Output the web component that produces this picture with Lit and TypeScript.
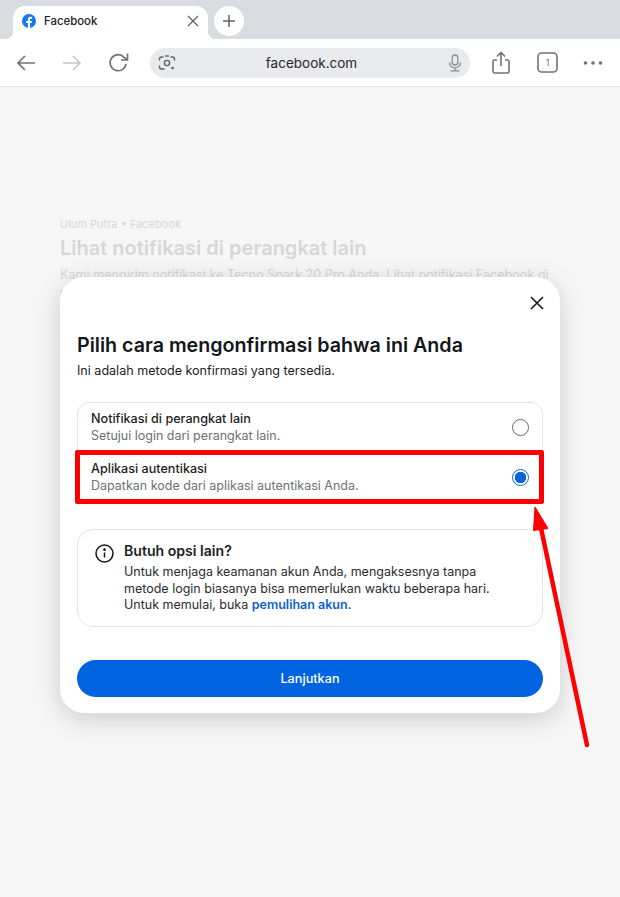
import { LitElement, html, css } from "lit";
import { customElement } from "lit/decorators.js";

@customElement("app-root")
export class AppRoot extends LitElement {
  static styles = css`
    :host { display: block; position: relative; width: 620px; height: 897px; overflow: hidden; background: #f6f6f6; font-family: Inter, "Noto Sans", sans-serif; color: #1c1e21; }
    * { box-sizing: border-box; }
    .strip { height: 39px; background: #d9dce0; display: flex; align-items: flex-end; padding-left: 13px; gap: 6px; }
    .tab { width: 195px; height: 33px; background: #fff; border-radius: 12px 12px 0 0; display: flex; align-items: center; padding: 0 8px 4px 9px; font-size: 11.4px; font-weight: 500; color: #202124; position: relative; }
    .tab::before, .tab::after { content: ""; position: absolute; bottom: 0; width: 8px; height: 8px; }
    .tab::before { left: -8px; background: radial-gradient(circle at 0 0, #d9dce0 8px, #fff 8.5px); }
    .tab::after { right: -8px; background: radial-gradient(circle at 100% 0, #d9dce0 8px, #fff 8.5px); }
    .tab span { flex: 1; margin-left: 8px; }
    .plus { width: 30px; height: 30px; border-radius: 50%; background: #fff; display: flex; align-items: center; justify-content: center; margin: 0 0 3px 0; }
    .toolbar { height: 48px; background: #fff; border-bottom: 1px solid #e3e4e6; display: flex; align-items: center; padding: 0 17px 0 16px; }
    .nav { display: flex; gap: 26px; align-items: center; width: 134px; flex: none; }
    .url { width: 320px; height: 30px; background: #e8eaed; border-radius: 15px; display: flex; align-items: center; justify-content: space-between; padding: 0 8px 0 8px; flex: none; font-size: 13.5px; color: #26282b; }
    .url b { font-weight: 400; margin-right: 1px; }
    .actions { display: flex; align-items: center; flex: 1; justify-content: space-between; padding: 0 0 0 21px; }
    .page { padding: 129px 60px 0; }
    .by { font-size: 11px; line-height: 16px; color: #d6d6d6; }
    .ghost-title { font-size: 20px; font-weight: 600; line-height: 28px; color: #d6d6d6; margin: 2px 0 4px; white-space: nowrap; }
    .ghost-text { font-size: 12.6px; line-height: 18px; color: #d6d6d6; white-space: nowrap; }
    .dialog { position: absolute; left: 60px; top: 277px; width: 500px; height: 436px; background: #fff; border-radius: 24px; box-shadow: 0 6px 26px rgba(0,0,0,.17); padding: 55px 17px 0; }
    .close { position: absolute; right: 15px; top: 18px; width: 16px; height: 16px; display: block; }
    h1 { margin: 0; padding-top: 1px; font-size: 19.66px; line-height: 24px; font-weight: 600; color: #14171a; white-space: nowrap; }
    .sub { margin: 6px 0 0; font-size: 12.55px; line-height: 16px; color: #1c1e21; }
    .options { margin-top: 23px; border: 1px solid #e3e4e6; border-radius: 12px; overflow: hidden; }
    .opt { height: 50px; display: flex; align-items: center; justify-content: space-between; padding: 0 13px 2px 13px; }
    .opt strong { display: block; font-size: 12.6px; line-height: 16px; font-weight: 500; color: #1c1e21; }
    .opt small { display: block; font-size: 12.5px; line-height: 17px; color: #6b7076; }
    .radio { width: 17px; height: 17px; border-radius: 50%; border: 1.7px solid #5f6670; flex: none; }
    .radio.on { border-color: #0a66d8; background: radial-gradient(circle, #0a66d8 5.5px, #fff 6px); }
    .info { margin-top: 25px; height: 98px; border: 1px solid #e3e4e6; border-radius: 16px; padding: 13px 17px; display: flex; gap: 10px; }
    .info svg { flex: none; margin-top: 1px; }
    .info h2 { margin: -1px 0 4px; font-size: 14.1px; line-height: 18px; font-weight: 600; color: #1c1e21; }
    .info p { margin: 0; font-size: 12.5px; line-height: 16.5px; color: #2a2d31; white-space: nowrap; }
    .info a { color: #0a62c9; font-weight: 600; text-decoration: none; }
    .btn { margin-top: 33px; height: 37px; border-radius: 19px; background: #0064e0; color: #fff; display: flex; align-items: center; justify-content: center; font-size: 12.7px; font-weight: 500; }
    .mark { position: absolute; left: 75px; top: 450px; width: 469px; height: 54px; border: 5px solid #fe0000; border-radius: 2px; }
    .arrow { position: absolute; left: 520px; top: 500px; }
  `;

  render() {
    const g = "#6f7378";
    return html`
      <div class="strip">
        <div class="tab">
          <svg width="14" height="14" viewBox="0 0 14 14"><circle cx="7" cy="7" r="7" fill="#1877f2"/><path d="M9.600 9l.35-2H8V5.800c0-.6.3-1.100 1.200-1.100h.85V3c-.5-.1-1-.15-1.500-.15C6.900 2.850 5.900 3.800 5.900 5.500V7H4.100v2h1.800v5h2.100V9z" fill="#fff"/></svg>
          <span>Facebook</span>
          <svg width="14" height="14" viewBox="0 0 14 14"><path d="M2 2l10 10M12 2L2 12" stroke="#5f6368" stroke-width="1.300" fill="none"/></svg>
        </div>
        <div class="plus"><svg width="14" height="14" viewBox="0 0 14 14"><path d="M7 1v12M1 7h12" stroke="#5f6368" stroke-width="1.500" fill="none"/></svg></div>
      </div>
      <div class="toolbar">
        <div class="nav">
          <svg width="20" height="16" viewBox="0 0 20 16"><path d="M19 8H2M9 1L2 8l7 7" stroke="${g}" stroke-width="1.700" fill="none"/></svg>
          <svg width="20" height="16" viewBox="0 0 20 16"><path d="M1 8h17M11 1l7 7-7 7" stroke="#c4c6c9" stroke-width="1.700" fill="none"/></svg>
          <svg width="21" height="20" viewBox="0 0 21 20"><path d="M18 11a8 8 0 1 1-2.500-7.200L19 6.500" stroke="${g}" stroke-width="1.700" fill="none"/><path d="M19.500 .5v6.500h-6.500" stroke="${g}" stroke-width="1.700" fill="none"/></svg>
        </div>
        <div class="url">
          <svg width="18" height="18" viewBox="0 0 18 18" fill="none" stroke="#5f6368" stroke-width="1.400"><path d="M1.500 6.500V5a2 2 0 0 1 2-2h2M12.500 3h2a2 2 0 0 1 2 2v1.500M1.500 11.500V13a2 2 0 0 0 2 2h3"/><circle cx="9" cy="9" r="2.600"/><circle cx="14.500" cy="14" r="1.300" fill="#5f6368" stroke="none"/><path d="M7 2h4"/></svg>
          <b>facebook.com</b>
          <svg width="14" height="18" viewBox="0 0 14 18" fill="none" stroke="#8a8e93" stroke-width="1.300"><rect x="4.200" y="1" width="5.600" height="10" rx="2.800"/><path d="M1.500 8.500a5.500 5.500 0 0 0 11 0M7 14v2.500M2.500 16.800h9"/></svg>
        </div>
        <div class="actions">
          <svg width="20" height="24" viewBox="0 0 20 24" fill="none" stroke="${g}" stroke-width="1.600"><path d="M6 9H3.500A1.500 1.500 0 0 0 2 10.500v10A1.500 1.500 0 0 0 3.500 22h13a1.500 1.500 0 0 0 1.500-1.500v-10A1.500 1.500 0 0 0 16.500 9H14M10 15V2M6 5.500L10 1.500l4 4"/></svg>
          <svg width="21" height="21" viewBox="0 0 21 21"><rect x="1" y="1" width="19" height="19" rx="3.500" fill="none" stroke="${g}" stroke-width="1.600"/><text x="10.500" y="14" font-size="9" font-family="Inter, sans-serif" text-anchor="middle" fill="${g}">1</text></svg>
          <svg width="20" height="6" viewBox="0 0 20 6" fill="${g}"><circle cx="2.500" cy="3" r="1.800"/><circle cx="10" cy="3" r="1.800"/><circle cx="17.500" cy="3" r="1.800"/></svg>
        </div>
      </div>
      <div class="page">
        <div class="by">Ulum Putra • Facebook</div>
        <div class="ghost-title">Lihat notifikasi di perangkat lain</div>
        <div class="ghost-text">Kami mengirim notifikasi ke Tecno Spark 20 Pro Anda. Lihat notifikasi Facebook di<br />perangkat tersebut untuk menyetujui login ini.</div>
      </div>
      <div class="dialog">
        <svg class="close" viewBox="0 0 16 16"><path d="M2 2l12 12M14 2L2 14" stroke="#14171a" stroke-width="1.600" fill="none"/></svg>
        <h1>Pilih cara mengonfirmasi bahwa ini Anda</h1>
        <p class="sub">Ini adalah metode konfirmasi yang tersedia.</p>
        <div class="options">
          <div class="opt"><div><strong>Notifikasi di perangkat lain</strong><small>Setujui login dari perangkat lain.</small></div><div class="radio"></div></div>
          <div class="opt"><div><strong>Aplikasi autentikasi</strong><small>Dapatkan kode dari aplikasi autentikasi Anda.</small></div><div class="radio on"></div></div>
        </div>
        <div class="info">
          <svg width="19" height="19" viewBox="0 0 19 19" fill="none" stroke="#14171a" stroke-width="1.500"><circle cx="9.500" cy="9.500" r="8.500"/><path d="M9.500 8.500v5"/><circle cx="9.500" cy="5.700" r=".6" fill="#14171a"/></svg>
          <div>
            <h2>Butuh opsi lain?</h2>
            <p>Untuk menjaga keamanan akun Anda, mengaksesnya tanpa<br />metode login biasanya bisa memerlukan waktu beberapa hari.<br />Untuk memulai, buka <a>pemulihan akun</a>.</p>
          </div>
        </div>
        <div class="btn">Lanjutkan</div>
      </div>
      <div class="mark"></div>
      <svg class="arrow" width="80" height="260" viewBox="520 500 80 260">
        <path d="M535 507L533.500 530.500L548 528.500Z" fill="#fe0000" stroke="#fe0000" stroke-width="1"/>
        <path d="M541 528L587 745" stroke="#fe0000" stroke-width="4.500" stroke-linecap="round" fill="none"/>
      </svg>
    `;
  }
}
